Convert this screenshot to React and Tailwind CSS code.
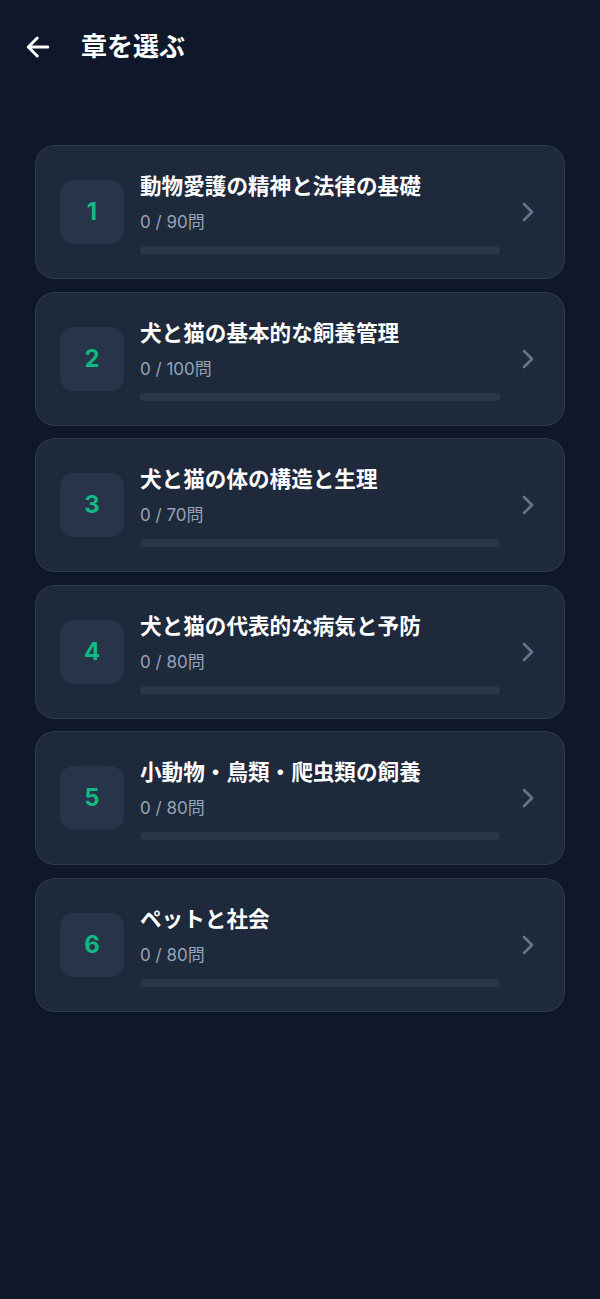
import { IoArrowBack } from "react-icons/io5";
import { ChevronRight } from "lucide-react";

const chapters = [
  { id: 1, title: "動物愛護の精神と法律の基礎", done: 0, total: 90 },
  { id: 2, title: "犬と猫の基本的な飼養管理", done: 0, total: 100 },
  { id: 3, title: "犬と猫の体の構造と生理", done: 0, total: 70 },
  { id: 4, title: "犬と猫の代表的な病気と予防", done: 0, total: 80 },
  { id: 5, title: "小動物・鳥類・爬虫類の飼養", done: 0, total: 80 },
  { id: 6, title: "ペットと社会", done: 0, total: 80 },
];

const ChapterCard = ({ chapter }) => {
  const percent = chapter.total ? (chapter.done / chapter.total) * 100 : 0;

  return (
    <button
      type="button"
      className="flex w-full items-center gap-3 rounded-[20px] border border-[#334155]/70 bg-[#1e293b] py-6 pl-6 pr-5 text-left"
    >
      <div className="flex h-16 w-16 shrink-0 items-center justify-center rounded-[14px] bg-[#273449]">
        <span className="text-2xl font-bold text-[#10b981]">{chapter.id}</span>
      </div>
      <div className="ml-1 flex min-w-0 flex-1 flex-col">
        <h3 className="text-[21.6px] font-bold leading-8 text-white">{chapter.title}</h3>
        <p className="mt-2 text-[17px] leading-6 text-[#94a3b8]">
          {chapter.done} / {chapter.total}問
        </p>
        <div className="mt-3 h-2 w-full overflow-hidden rounded-full bg-[#2b3649]">
          <div className="h-full rounded-full bg-[#10b981]" style={{ width: `${percent}%` }} />
        </div>
      </div>
      <ChevronRight size={32} strokeWidth={2} className="shrink-0 text-[#64748b]" />
    </button>
  );
};

const App = () => {
  return (
    <div
      className="min-h-screen bg-[#0f172a]"
      style={{ fontFamily: '"Inter", "Noto Sans CJK JP", sans-serif' }}
    >
      <header className="flex items-center gap-[27px] px-[22px] pt-[31px]">
        <button type="button" className="text-white">
          <IoArrowBack size={32} />
        </button>
        <h1 className="text-[26px] font-bold leading-8 text-white">章を選ぶ</h1>
      </header>

      <div className="flex flex-col gap-[12.5px] px-[35px] pt-[82px]">
        {chapters.map((chapter) => (
          <ChapterCard key={chapter.id} chapter={chapter} />
        ))}
      </div>
    </div>
  );
};

export default App;
